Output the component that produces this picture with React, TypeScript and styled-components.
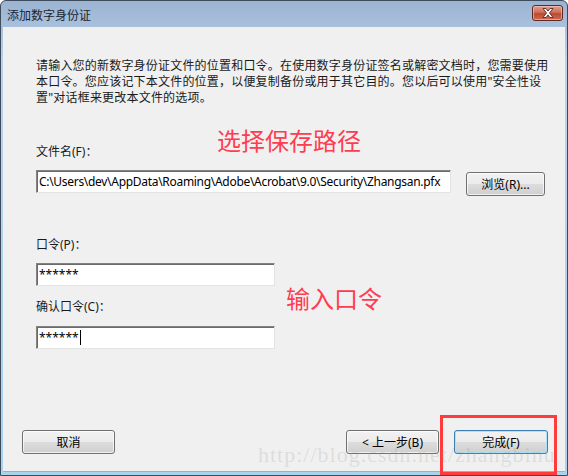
import styled, { createGlobalStyle } from "styled-components";

const GlobalStyle = createGlobalStyle`
  html, body {
    margin: 0;
    padding: 0;
    width: 568px;
    height: 476px;
    overflow: hidden;
    background: #ffffff;
  }
`;

const ui = `"Noto Sans", "Noto Sans CJK SC", sans-serif`;

const App = () => {
  return (
    <>
      <GlobalStyle />
      <Window>
        <TitleBar>
          <Title>添加数字身份证</Title>
          <CloseButton aria-label="关闭">
            <svg width="16" height="12" viewBox="0 0 16 12">
              <path
                d="M3 1.5h3l2 2.6 2-2.6h3l-3.5 4.5 3.5 4.5h-3l-2-2.6-2 2.6h-3l3.5-4.5z"
                fill="#ffffff"
                stroke="#5a2a22"
                strokeWidth="0.9"
                strokeLinejoin="round"
              />
            </svg>
          </CloseButton>
        </TitleBar>
        <Client>
          <Content>
            <Intro>
              请输入您的新数字身份证文件的位置和口令。在使用数字身份证签名或解密文档时，您需要使用
              <br />
              本口令。您应该记下本文件的位置，以便复制备份或用于其它目的。您以后可以使用"安全性设
              <br />
              置"对话框来更改本文件的选项。
            </Intro>
            <Label $top={38}>文件名(F)：</Label>
            <FileRow>
              <TextBox $width={415} $tight>
                C:\Users\dev\AppData\Roaming\Adobe\Acrobat\9.0\Security\Zhangsan.pfx
              </TextBox>
              <Button $width={79}>浏览(R)...</Button>
            </FileRow>
            <Label $top={41}>口令(P)：</Label>
            <TextBox $width={239} $top={10}>
              ******
            </TextBox>
            <Label $top={13}>确认口令(C)：</Label>
            <TextBox $width={239} $top={11}>
              ******
              <Caret />
            </TextBox>
          </Content>
          <Footer>
            <Button $width={93}>取消</Button>
            <FooterRight>
              <Button $width={93}>&lt; 上一步(B)</Button>
              <FinishWrap>
                <Button $width={94} $primary>
                  完成(F)
                </Button>
                <Highlight />
              </FinishWrap>
            </FooterRight>
          </Footer>
        </Client>
        <Note $left={216} $top={123}>
          选择保存路径
        </Note>
        <Note $left={285} $top={281}>
          输入口令
        </Note>
        <Watermark>http://blog.csdn.net/zhangbinu</Watermark>
      </Window>
    </>
  );
};

export default App;

const Window = styled.div`
  position: relative;
  width: 568px;
  height: 476px;
  box-sizing: border-box;
  display: flex;
  flex-direction: column;
  border: 1px solid #3d4b5c;
  border-radius: 6px 6px 0 0;
  background: linear-gradient(#9bb4d2, #bad1ea 60px, #a8d4ee);
  overflow: hidden;
`;

const TitleBar = styled.div`
  height: 26px;
  display: flex;
  align-items: center;
  justify-content: space-between;
  padding: 0 4px 0 6px;
  flex-shrink: 0;
`;

const Title = styled.div`
  font-family: ${ui};
  font-size: 12px;
  color: #1b2430;
  margin-top: 1px;
`;

const CloseButton = styled.div`
  width: 31px;
  height: 16px;
  margin-top: -2px;
  box-sizing: border-box;
  display: flex;
  align-items: center;
  justify-content: center;
  border: 1px solid #5f2a23;
  border-radius: 3px;
  background: linear-gradient(#e2a08f, #cf6e59 45%, #bb4a33 55%, #d16a4f);
  box-shadow: inset 0 0 0 1px rgba(255, 210, 200, 0.55);
`;

const Client = styled.div`
  flex: 1;
  display: flex;
  flex-direction: column;
  margin: 0 2px 3px 2px;
  background: #f0f0f0;
  border-bottom: 1px solid #5cc6ec;
`;

const Content = styled.div`
  display: flex;
  flex-direction: column;
  align-items: flex-start;
  padding: 31px 0 0 33px;
`;

const Intro = styled.p`
  margin: 0;
  font-family: ${ui};
  font-size: 12px;
  line-height: 16px;
  letter-spacing: 0.2px;
  color: #1a1a1a;
`;

const Label = styled.div<{ $top: number }>`
  margin-top: ${(p) => p.$top}px;
  font-family: ${ui};
  font-size: 12px;
  line-height: 16px;
  color: #1a1a1a;
`;

const FileRow = styled.div`
  display: flex;
  align-items: flex-start;
  gap: 15px;
  margin-top: 10px;
`;

const TextBox = styled.div<{ $width: number; $top?: number; $tight?: boolean }>`
  width: ${(p) => p.$width}px;
  height: 23px;
  box-sizing: border-box;
  margin-top: ${(p) => p.$top ?? 0}px;
  display: flex;
  align-items: center;
  padding: 0 2px;
  background: #ffffff;
  border: 1px solid;
  border-color: #828282 #e3e3e3 #e3e3e3 #828282;
  box-shadow: inset 1px 1px 0 #6a6a6a;
  font-family: ${ui};
  font-size: 12px;
  letter-spacing: ${(p) => (p.$tight ? "-0.3px" : "0")};
  color: #000000;
  white-space: nowrap;
  overflow: hidden;
`;

const Caret = styled.span`
  display: inline-block;
  width: 1px;
  height: 15px;
  margin-left: 1px;
  background: #000000;
`;

const Button = styled.div<{ $width: number; $primary?: boolean }>`
  width: ${(p) => p.$width}px;
  height: 24px;
  box-sizing: border-box;
  display: flex;
  align-items: center;
  justify-content: center;
  margin-top: 2px;
  border: 1px solid ${(p) => (p.$primary ? "#3c7fb1" : "#707070")};
  border-radius: 3px;
  background: linear-gradient(#f2f2f2, #ebebeb 50%, #dddddd 51%, #cfcfcf);
  box-shadow: inset 0 0 0 1px
    ${(p) => (p.$primary ? "#aee2f8" : "rgba(255, 255, 255, 0.7)")};
  font-family: ${ui};
  font-size: 12px;
  color: #000000;
`;

const Footer = styled.div`
  margin-top: auto;
  display: flex;
  justify-content: space-between;
  align-items: flex-end;
  padding: 0 17px 17px 19px;
`;

const FooterRight = styled.div`
  display: flex;
  gap: 15px;
`;

const FinishWrap = styled.div`
  position: relative;
`;

const Highlight = styled.div`
  position: absolute;
  left: -14px;
  right: -9px;
  top: -13px;
  bottom: -21px;
  border: 3px solid #ff3b3b;
  pointer-events: none;
`;

const Note = styled.div<{ $left: number; $top: number }>`
  position: absolute;
  left: ${(p) => p.$left}px;
  top: ${(p) => p.$top}px;
  font-family: "Noto Sans CJK SC", sans-serif;
  font-size: 24px;
  line-height: 32px;
  color: #ff3c50;
`;

const Watermark = styled.div`
  position: absolute;
  left: 257px;
  top: 441px;
  font-family: "Liberation Serif", serif;
  font-size: 22px;
  letter-spacing: 1px;
  color: rgba(150, 150, 150, 0.22);
  pointer-events: none;
`;
